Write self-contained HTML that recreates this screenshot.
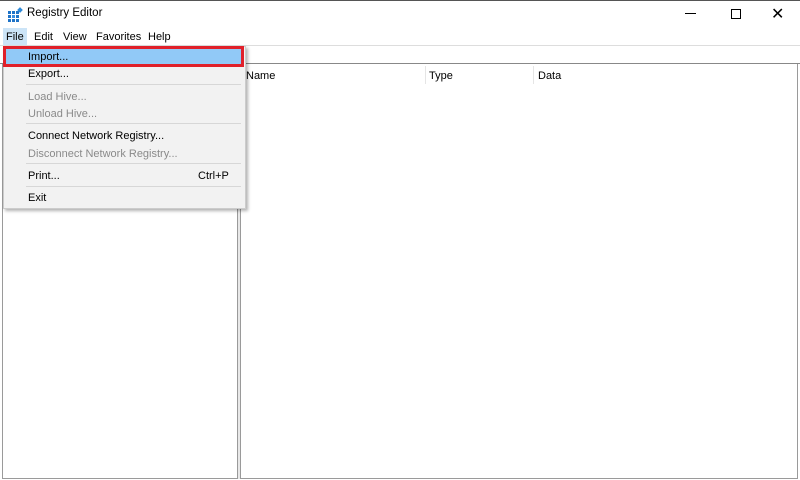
<!DOCTYPE html>
<html><head><meta charset="utf-8"><style>
*{margin:0;padding:0;box-sizing:border-box}
body{width:800px;height:480px;background:#fff;font-family:"Liberation Sans",sans-serif;font-size:11px;color:#000;position:relative;overflow:hidden}
.a{position:absolute}
.mi{position:absolute;left:28px;font-size:11px}
.dis{color:#8a8a8a}
.sep{position:absolute;left:26px;width:215px;height:1px;background:#d7d7d7}
</style></head><body>
<div class="a" style="left:0;top:0;width:800px;height:28px;background:#fff;border-top:1px solid #555"></div>
<svg class="a" style="left:7px;top:7px" width="16" height="16" viewBox="0 0 16 16">
<rect x="1" y="4" width="3" height="3" fill="#1e73c8"/><rect x="5" y="4" width="3" height="3" fill="#1e73c8"/><rect x="9" y="4" width="3" height="3" fill="#1e73c8"/>
<rect x="1" y="8" width="3" height="3" fill="#1e73c8"/><rect x="5" y="8" width="3" height="3" fill="#3a8ee0"/><rect x="9" y="8" width="3" height="3" fill="#1e73c8"/>
<rect x="1" y="12" width="3" height="3" fill="#1e73c8"/><rect x="5" y="12" width="3" height="3" fill="#1e73c8"/><rect x="9" y="12" width="3" height="3" fill="#1e73c8"/>
<rect x="11" y="1" width="4" height="4" fill="#2f8ad8" transform="rotate(45 13 3)"/></svg>
<div class="a" style="left:27px;top:7px;font-size:11.5px">Registry Editor</div>
<div class="a" style="left:685px;top:13px;width:11px;height:1px;background:#000"></div>
<div class="a" style="left:731px;top:9px;width:10px;height:10px;border:1px solid #000"></div>
<div class="a" style="left:771px;top:4px;font-size:16px;font-weight:300">✕</div>
<div class="a" style="left:3px;top:28px;width:24px;height:18px;background:#cce4f7"></div>
<div class="a" style="left:6px;top:31px">File</div>
<div class="a" style="left:34px;top:31px">Edit</div>
<div class="a" style="left:63px;top:31px">View</div>
<div class="a" style="left:96px;top:31px">Favorites</div>
<div class="a" style="left:148px;top:31px">Help</div>
<div class="a" style="left:0;top:45px;width:800px;height:1px;background:#ddd"></div>
<div class="a" style="left:0;top:63px;width:800px;height:1px;background:#888"></div>
<div class="a" style="left:2px;top:64px;width:236px;height:415px;border:1px solid #9a9a9a;border-top:none"></div>
<div class="a" style="left:238px;top:64px;width:3px;height:415px;background:#e8e8e8"></div>
<div class="a" style="left:240px;top:64px;width:558px;height:415px;border-left:1px solid #9a9a9a;border-right:1px solid #9a9a9a;border-bottom:1px solid #9a9a9a"></div>
<div class="a" style="left:246px;top:70px">Name</div>
<div class="a" style="left:425px;top:66px;width:1px;height:18px;background:#e5e5e5"></div>
<div class="a" style="left:429px;top:70px">Type</div>
<div class="a" style="left:533px;top:66px;width:1px;height:18px;background:#e5e5e5"></div>
<div class="a" style="left:538px;top:70px">Data</div>
<div class="a" style="left:3px;top:46px;width:243px;height:163px;background:#f2f2f2;border:1px solid #ccc;box-shadow:2px 2px 3px rgba(0,0,0,.3)"></div>
<div class="a" style="left:3px;top:46px;width:241px;height:21px;background:#91c9f7;border:3px solid #e0202a"></div>
<div class="mi" style="top:51px">Import...</div>
<div class="mi" style="top:68px">Export...</div>
<div class="sep" style="top:84px"></div>
<div class="mi dis" style="top:91px">Load Hive...</div>
<div class="mi dis" style="top:108px">Unload Hive...</div>
<div class="sep" style="top:123px"></div>
<div class="mi" style="top:130px">Connect Network Registry...</div>
<div class="mi dis" style="top:148px">Disconnect Network Registry...</div>
<div class="sep" style="top:163px"></div>
<div class="mi" style="top:170px">Print...</div>
<div class="a" style="left:198px;top:170px">Ctrl+P</div>
<div class="sep" style="top:186px"></div>
<div class="mi" style="top:192px">Exit</div>
</body></html>
